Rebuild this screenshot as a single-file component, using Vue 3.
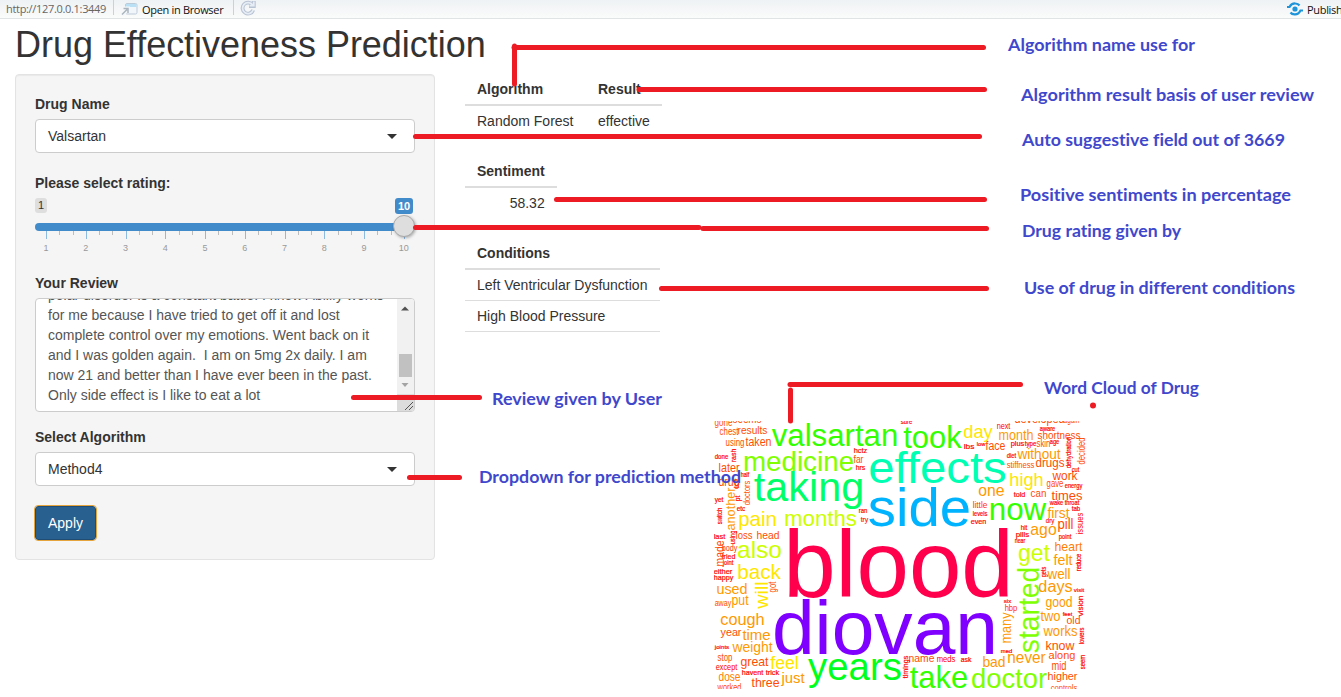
<script setup>
const ticks = Array.from({ length: 28 }, (_, i) => ({
  x: 11 + i * 13.25,
  major: i % 3 === 0,
  label: i / 3 + 1,
}))

const review = [
  'polar disorder is a constant battle. I know Abilify works',
  'for me because I have tried to get off it and lost',
  'complete control over my emotions. Went back on it',
  'and I was golden again.\u00a0 I am on 5mg 2x daily. I am',
  'now 21 and better than I have ever been in the past.',
  'Only side effect is I like to eat a lot',
]

// text, left, baseline, width
const notes = [
  ['Algorithm name use for', 1008, 51, 187],
  ['Algorithm result basis of user review', 1021, 101, 293],
  ['Auto suggestive field out of 3669', 1022, 146, 263],
  ['Positive sentiments in percentage', 1020, 201, 271],
  ['Drug rating given by', 1022, 237, 159],
  ['Use of drug in different conditions', 1024, 294, 271],
  ['Review given by User', 492, 405, 170],
  ['Dropdown for prediction method', 479, 483, 262],
  ['Word Cloud of Drug', 1044, 394, 155],
]

// x1, y1, x2, y2
const pointers = [
  [514, 47.5, 983.5, 47.5],
  [514.5, 46, 514.5, 84],
  [639, 89.5, 984.5, 89.5],
  [415.5, 136.5, 979.5, 136.5],
  [556.5, 199.5, 984.5, 199.5],
  [415.5, 227.5, 699, 227.5],
  [703, 228.5, 986.5, 228.5],
  [661.5, 288.5, 986.5, 288.5],
  [353.5, 397.5, 479.5, 397.5],
  [409.5, 477.5, 459.5, 477.5],
  [790, 384.5, 1020.5, 384.5],
  [790.5, 390, 790.5, 421],
]

const A = '#ff0000', B = '#ff3300', C = '#ff4d00', O = '#ff9900', Y = '#ffe600'
const L = '#ccff00', M = '#80ff00', G = '#33ff00'

// text, ink left, baseline, ink width, size, colour
const across = [
  ['blood', 787, 597, 223, 95, '#ff004d'],
  ['diovan', 775, 654, 220, 76, '#8000ff'],
  ['side', 870, 526, 99, 54, '#00b3ff'],
  ['effects', 870, 483, 135, 45, '#00ffb3'],
  ['taking', 755.5, 501, 107, 41, '#00ff66'],
  ['years', 809.5, 680, 91, 38, '#00ff1a'],
  ['valsartan', 773, 446, 124, 31, G], ['took', 904.5, 448, 56, 31, G],
  ['now', 990, 520, 55, 31, G], ['take', 911, 688, 56, 32, G],
  ['medicine', 744, 471, 109, 28, M], ['doctor', 972, 688, 74, 28, M],
  ['months', 785, 526, 71, 22, L], ['also', 738, 558, 43, 24, L], ['get', 1019, 561, 30, 23, L],
  ['pain', 739, 526, 37, 21, Y], ['back', 738, 579, 42, 21, Y], ['day', 964, 438, 28, 19, Y],
  ['high', 1010, 486, 33, 19, Y], ['feel', 771, 669, 27, 18, Y],
  ['used', 717, 594, 30, 14, O], ['put', 732, 605, 16, 14, O], ['cough', 721, 625, 43, 17, O],
  ['time', 743, 640, 27, 15, O], ['weight', 733, 652, 39, 15, O], ['dose', 719, 681, 21, 12, '#ff8000'],
  ['just', 782, 683, 22, 15, O], ['month', 999, 440, 34, 14, O], ['without', 1018, 459, 42, 15, O],
  ['one', 979, 496, 25, 16, O], ['first', 1048, 518, 21, 14, O], ['ago', 1031, 535, 25, 17, O],
  ['heart', 1055, 551, 27, 13, '#ff8000'], ['felt', 1054, 565, 18, 14, O], ['well', 1048, 579, 22, 14, O],
  ['days', 1039, 592, 33, 16, O], ['good', 1046, 607, 26, 14, O], ['two', 1041, 621, 19, 15, O],
  ['works', 1044, 636, 33, 14, O], ['bad', 983, 667, 22, 15, O], ['never', 1008, 663, 37, 16, O],
  ['gone', 715, 426, 17, 11, C], ['seems', 733, 423, 28, 12, C], ['chest', 720, 435, 18, 10, C],
  ['results', 738, 434, 29, 11, C], ['using', 726, 446, 18, 10, C], ['taken', 746, 446, 25, 12, C],
  ['far', 854, 463, 9, 10, C], ['later', 719, 472, 20, 12, C], ['drug', 719, 486, 20, 13, C],
  ['loss', 736, 539, 16, 11, C], ['head', 757, 539, 22, 11, C], ['away', 715, 606, 16, 9, C],
  ['year', 721, 636, 20, 11, C], ['stop', 718, 661, 14, 10, C], ['great', 741, 666, 27, 13, C],
  ['three', 752, 687, 27, 13, C], ['worked', 718, 691, 23, 10, C], ['developed', 1015, 423, 49, 13, C],
  ['again', 1064, 423, 15, 10, C], ['shortness', 1038, 439, 42, 11, C], ['face', 986, 450, 19, 12, C],
  ['skin', 1037, 447, 13, 10, C], ['stiffness', 1007, 468, 27, 9, C], ['drugs', 1036, 467, 28, 12, C],
  ['work', 1053, 480, 24, 13, C], ['gave', 1047, 487, 16, 10, C], ['can', 1031, 497, 15, 11, C],
  ['times', 1052, 500, 30, 13, C], ['pill', 1058, 529, 15, 14, C], ['old', 1067, 624, 13, 11, C],
  ['know', 1046, 650, 28, 13, C], ['along', 1049, 659, 26, 11, C], ['mid', 1052, 670, 14, 12, C],
  ['higher', 1048, 680, 29, 11, C], ['controls', 1051, 691, 26, 9, C], ['name', 909, 662, 25, 10, C],
  ['done', 715, 459, 13, 7, A], ['hctz', 854, 453, 13, 8, A], ['hrs', 856, 470, 9, 8, A],
  ['half', 741, 477, 8, 7, A], ['yet', 715, 502, 8, 7, A], ['etc', 737, 511, 8, 7, A],
  ['ran', 859, 513, 8, 7, A], ['try', 861, 522, 7, 8, B], ['last', 714, 539, 11, 8, A],
  ['body', 722, 551, 15, 9, B], ['tried', 722, 559, 13, 8, A], ['joint', 723, 565, 10, 7, A],
  ['either', 714, 574, 18, 8, A], ['happy', 714, 580, 19, 8, A], ['joints', 715, 649, 14, 6, A],
  ['except', 716, 670, 21, 9, A], ['havent', 742, 675, 21, 8, A], ['trick', 766, 675, 13, 8, A],
  ['sure', 901, 424, 11, 8, A], ['next', 997, 429, 13, 9, A], ['aware', 1040, 431, 15, 6.5, A],
  ['lbs', 964, 449, 10, 8, A], ['low', 977, 446, 8, 6, A], ['plus', 1011, 446, 13, 8, A],
  ['type', 1025, 446, 11, 7, A], ['age', 1050, 444, 9, 7, A], ['diet', 1007, 458, 9, 7, A],
  ['cut', 1072, 472, 7, 7, A], ['energy', 1065, 488, 17, 7, A], ['told', 1014, 497, 11, 8, A],
  ['little', 973, 508, 14, 9, B], ['levels', 973, 516, 14, 7, A], ['even', 971, 524, 15, 8, A],
  ['wake', 1050, 505, 13, 7, A], ['throat', 1065, 505, 14, 7, A], ['tab', 1072, 511, 8, 7, A],
  ['dry', 1046, 523, 8, 7, B], ['hit', 1021, 530, 6, 7, A], ['pills', 1016, 537, 13, 8, A],
  ['point', 1059, 539, 12, 7, A], ['near', 1015, 543, 10, 7, A], ['visit', 1074, 592, 10, 6, A],
  ['feet', 1063, 616, 9, 6, A], ['six', 1004, 603, 7, 6, A], ['hbp', 1005, 611, 12, 9, B],
  ['meds', 937, 662, 18, 9, A], ['ask', 961, 662, 10, 7, A], ['med', 1001, 653, 11, 6, A],
]

// text, baseline x, bottom, ink length, size, colour; read from bottom to top
const upward = [
  ['started', 1039, 652, 84, 29, M], ['will', 768, 608, 26, 19, Y],
  ['another', 735, 530, 42, 13, O], ['many', 1011, 643, 30, 14, O],
  ['rash', 736, 462, 13, 8, A], ['doctors', 750, 505, 24, 9, C],
  ['lot', 739, 488, 9, 8, C], ['pt', 740, 501, 5, 7, A], ['switch', 722, 524, 16, 7, A],
  ['using', 735, 544, 13, 7, A], ['made', 724, 566, 25, 12, C], ['got', 776, 592, 10, 10, C],
  ['dehydration', 1071, 468, 31, 7, A], ['decided', 1085, 464, 26, 10, C],
  ['issues', 1083, 534, 21, 9, A], ['reduce', 1081, 571, 17, 7, A], ['gets', 1046, 577, 10, 7, A],
  ['vision', 1083, 616, 20, 8, A], ['lowers', 1084, 644, 16, 7, A],
  ['seem', 1085, 669, 14, 7, A], ['timings', 908, 678, 22, 7, A],
]
</script>

<template>
  <div class="page">
    <header class="toolbar">
      <span class="url">http://127.0.0.1:3449</span>
      <i class="sep"></i>
      <svg class="popout" width="17" height="14" viewBox="0 0 17 14">
        <rect x="4.5" y="1.500" width="11.5" height="10.500" rx="1.5" fill="#f1f6fa" stroke="#bccbd8" />
        <path d="M5 2h10.5v3H5z" fill="#b9e0f5" />
        <path d="M1 13l5-5M2.500 6.500H7V11" fill="none" stroke="#f4f7f9" stroke-width="4" />
        <path d="M1 12.500l5-5M2.500 6.500H7V11" fill="none" stroke="#a9b4bf" stroke-width="1.500" />
      </svg>
      <span class="open">Open in Browser</span>
      <i class="sep"></i>
      <svg class="reload" width="16" height="16" viewBox="0 0 16 16">
        <path d="M12.600 5A5.500 5.500 0 1 0 13.200 10M13.800 1v5H9" fill="none" stroke="#b7c2d3" stroke-width="3.800" />
        <path d="M12.600 5A5.500 5.500 0 1 0 13.200 10M13.800 1.500v4.200H9.500" fill="none" stroke="#e7edf5" stroke-width="1.800" />
      </svg>
      <span class="publish">
        <svg width="16" height="14" viewBox="0 0 16 14">
          <circle cx="8" cy="7" r="2.600" fill="#1e95da" />
          <path d="M0 5h2.500C4 2.200 6 1.300 8.500 1.500c1.800.1 3.200.9 4 2M16 8.500h-2.500C12 11.500 10 12.600 7.500 12.400c-1.800-.1-3.200-.8-4-1.900" fill="none" stroke="#1e95da" stroke-width="2.200" />
        </svg>
        Publish
      </span>
    </header>

    <h1>Drug Effectiveness Prediction</h1>

    <main class="columns">
      <form class="well">
        <label>Drug Name</label>
        <div class="select">Valsartan<i class="caret"></i></div>

        <label>Please select rating:</label>
        <div class="slider">
          <div class="badges"><span class="min">1</span><span class="value">10</span></div>
          <div class="track"></div>
          <svg class="scale" width="380" height="25">
            <template v-for="t in ticks" :key="t.x">
              <rect :x="Math.round(t.x)" y="0" width="1" :height="t.major ? 8 : 4" :fill="t.major ? '#8ebadf' : '#bdbdbd'" />
              <text v-if="t.major" :x="t.x" y="20" text-anchor="middle">{{ t.label }}</text>
            </template>
          </svg>
          <i class="handle"></i>
        </div>

        <label>Your Review</label>
        <div class="review">
          <div class="lines"><div v-for="line in review" :key="line">{{ line }}</div></div>
          <svg class="scrollbar" width="17" height="112" viewBox="0 0 17 112">
            <rect width="17" height="112" fill="#f1f1f1" />
            <path d="M4 11.500l4-4 4 4z" fill="#505050" />
            <rect x="2" y="55" width="13" height="23" fill="#c1c1c1" />
            <path d="M4.500 84h7L8 88z" fill="#a3a3a3" />
            <rect y="95" width="17" height="17" fill="#dcdcdc" />
            <path d="M8 111l8-8M12 111l4-4" stroke="#555" />
          </svg>
        </div>

        <label>Select Algorithm</label>
        <div class="select">Method4<i class="caret"></i></div>
        <button type="button">Apply</button>
      </form>

      <section class="results">
        <table>
          <thead><tr><th>Algorithm</th><th>Result</th></tr></thead>
          <tbody><tr><td>Random Forest</td><td>effective</td></tr></tbody>
        </table>
        <table>
          <thead><tr><th class="num">Sentiment</th></tr></thead>
          <tbody><tr><td class="num">58.32</td></tr></tbody>
        </table>
        <table class="ruled">
          <thead><tr><th>Conditions</th></tr></thead>
          <tbody>
            <tr><td>Left Ventricular Dysfunction</td></tr>
            <tr><td>High Blood Pressure</td></tr>
          </tbody>
        </table>
      </section>
    </main>

    <svg class="overlay" width="1341" height="697" viewBox="0 0 1341 697">
      <defs><clipPath id="plot"><rect x="714" y="421" width="376" height="268" /></clipPath></defs>
      <g clip-path="url(#plot)">
        <text
          v-for="([word, x, y, w, size, fill], i) in across" :key="'a' + i"
          :class="{ tiny: size < 9 }"
          :x="x - size * 0.04" :y="y" :font-size="size" :fill="fill"
          :textLength="w + size * 0.08" lengthAdjust="spacingAndGlyphs"
        >{{ word }}</text>
        <text
          v-for="([word, x, y, w, size, fill], i) in upward" :key="'u' + i"
          :class="{ tiny: size < 9 }"
          :transform="`translate(${x} ${y + size * 0.04}) rotate(-90)`" :font-size="size" :fill="fill"
          :textLength="w + size * 0.08" lengthAdjust="spacingAndGlyphs"
        >{{ word }}</text>
      </g>
      <g class="pointers">
        <line v-for="([x1, y1, x2, y2], i) in pointers" :key="i" :x1="x1" :y1="y1" :x2="x2" :y2="y2" />
      </g>
      <circle cx="1093" cy="405.500" r="3" fill="#ed1c24" />
      <g class="notes">
        <text
          v-for="[text, x, y, w] in notes" :key="text"
          :x="x" :y="y" :textLength="w" lengthAdjust="spacingAndGlyphs"
        >{{ text }}</text>
      </g>
    </svg>
  </div>
</template>

<style>
body {
  margin: 0;
  background: #fff;
}
</style>

<style scoped>
.page {
  position: relative;
  width: 1341px;
  height: 697px;
  overflow: hidden;
  box-sizing: border-box;
  font: 14px/20px "Liberation Sans", Arial, sans-serif;
  color: #333;
}
.toolbar {
  display: flex;
  align-items: center;
  box-sizing: border-box;
  height: 19px;
  padding-left: 6px;
  border-bottom: 1px solid #e1e4e5;
  background: linear-gradient(#eff2f4, #fafbfb);
  font: 11px/18px "Open Sans", "Noto Sans", sans-serif;
  letter-spacing: -0.32px;
  color: #111;
  white-space: nowrap;
}
.url {
  width: 107px;
  color: #666;
}
.sep {
  width: 1px;
  height: 15px;
  margin-bottom: 3px;
  background: #cdd1d4;
}
.popout { margin-left: 7px; }
.open {
  width: 91px;
  margin: 2px 0 0 4px;
}
.reload { margin: -3px 0 0 6px; }
.publish {
  display: flex;
  align-items: center;
  gap: 4px;
  width: 54px;
  margin: 2px 0 0 auto;
}
.publish svg {
  flex: none;
  margin-top: -3px;
}
h1 {
  margin: 6px 0 9px 15px;
  font-size: 36px;
  font-weight: 400;
  line-height: 40px;
  letter-spacing: -0.03px;
}
.columns {
  display: flex;
  gap: 30px;
  padding-left: 15px;
}
.well {
  box-sizing: border-box;
  width: 420px;
  height: 486px;
  padding: 19px;
  border: 1px solid #e3e3e3;
  border-radius: 4px;
  background: #f5f5f5;
  box-shadow: inset 0 1px 1px rgba(0, 0, 0, 0.05);
}
label {
  display: block;
  margin-bottom: 5px;
  font-weight: 700;
}
.select {
  display: flex;
  align-items: center;
  justify-content: space-between;
  box-sizing: border-box;
  height: 34px;
  margin-bottom: 20px;
  padding: 0 17px 0 12px;
  border: 1px solid #ccc;
  border-radius: 4px;
  background: #fff;
}
.caret {
  border: 5px solid transparent;
  border-top-color: #333;
  border-bottom: 0;
}
.slider {
  position: relative;
  height: 75px;
}
.badges {
  display: flex;
  justify-content: space-between;
  height: 25px;
  font-size: 11px;
  line-height: 15px;
}
.min, .value {
  height: 15px;
  border-radius: 3px;
  text-align: center;
}
.min {
  width: 12px;
  background: #dedede;
}
.value {
  width: 18px;
  height: 16px;
  margin-right: 2px;
  background: #428bca;
  color: #fff;
  font-weight: 700;
  line-height: 16px;
}
.track {
  height: 8px;
  border-radius: 5px;
  background: #428bca;
}
.scale {
  display: block;
  font-size: 9px;
  fill: #999;
}
.handle {
  position: absolute;
  top: 17px;
  right: 0;
  box-sizing: border-box;
  width: 22px;
  height: 22px;
  border: 1px solid #aaa;
  border-radius: 50%;
  background: #dedede;
  box-shadow: 1px 1px 3px rgba(0, 0, 0, 0.3);
}
.review {
  display: flex;
  box-sizing: border-box;
  height: 114px;
  margin-bottom: 15px;
  overflow: hidden;
  border: 1px solid #ccc;
  border-radius: 4px;
  background: #fff;
  color: #555;
}
.lines {
  display: flex;
  flex: 1;
  flex-direction: column;
  justify-content: flex-end;
  padding: 0 0 6px 12px;
  white-space: nowrap;
}
button {
  display: block;
  width: 61px;
  height: 34px;
  padding: 0;
  border: 1px solid #204d74;
  border-radius: 3px;
  outline: 1px solid #e5a53c;
  background: #286090;
  color: #fff;
  font: inherit;
}
.results { width: 250px; }
table {
  margin-bottom: 19px;
  border-spacing: 0;
}
th, td {
  padding: 5px 12px 6px;
  font-weight: 400;
  text-align: left;
  white-space: nowrap;
}
th {
  padding-bottom: 5px;
  border-bottom: 2px solid #ddd;
  font-weight: 700;
}
th + th, td + td { padding-left: 12.5px; }
.num { text-align: right; }
.ruled td {
  padding-right: 12.6px;
  padding-bottom: 5px;
  border-bottom: 1px solid #ddd;
}
.overlay {
  position: absolute;
  inset: 0;
}
.tiny {
  stroke: #f00;
  stroke-width: 0.2px;
}
.pointers {
  stroke: #ed1c24;
  stroke-width: 5px;
  stroke-linecap: round;
}
.notes {
  font: 700 17.5px Lato, "Open Sans", sans-serif;
  font-variant-ligatures: none;
  fill: #3f48cc;
}
</style>
